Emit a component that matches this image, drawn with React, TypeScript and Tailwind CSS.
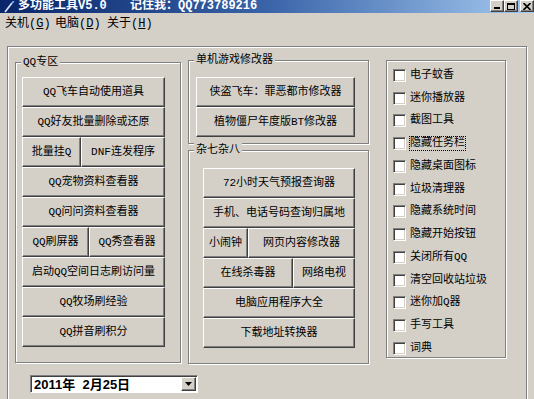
import type { ReactNode } from "react";

const raised =
  "border border-t-white border-l-white border-r-[#404040] border-b-[#404040] shadow-[inset_-1px_-1px_0_#808080]";
const etched = "border border-[#808080] shadow-[1px_1px_0_#fff,inset_1px_1px_0_#fff]";

function Btn({ children, className = "" }: { children: ReactNode; className?: string }) {
  return (
    <div className={`${raised} flex h-[30px] shrink-0 items-center justify-center bg-[#d4d0c8] text-[11px] leading-none whitespace-nowrap ${className}`}>
      {children}
    </div>
  );
}

function Group({ label, className = "", children }: { label?: string; className?: string; children: ReactNode }) {
  return (
    <div className={`relative ${etched} ${className}`}>
      {label && (
        <span className="absolute -top-[8px] left-[5px] bg-[#d4d0c8] px-[2px] text-[11px] leading-[14px]">{label}</span>
      )}
      {children}
    </div>
  );
}

const checks = [
  "电子蚊香",
  "迷你播放器",
  "截图工具",
  "隐藏任务栏",
  "隐藏桌面图标",
  "垃圾清理器",
  "隐藏系统时间",
  "隐藏开始按钮",
  "关闭所有QQ",
  "清空回收站垃圾",
  "迷你加Q器",
  "手写工具",
  "词典",
];

function TitleBar() {
  return (
    <div className="flex h-[13px] items-center overflow-hidden bg-linear-to-r from-[#0a246a] via-[#3a64a8] to-[#a6caf0] text-white">
      <svg width="14" height="12" viewBox="0 0 14 12" className="ml-[2px] shrink-0">
        <path d="M3 11 L10 2" stroke="#dfe8ff" strokeWidth="1.6" />
        <path d="M10 2 L12 0" stroke="#7fb0ff" strokeWidth="1.6" />
      </svg>
      <span className="ml-[2px] w-[112px] shrink-0 text-[12px] leading-[13px] font-bold">多功能工具V5.0</span>
      <span className="text-[12px] leading-[13px] font-bold">记住我：QQ773789216</span>
      <div className="ml-auto flex items-end self-start">
        <div className={`${raised} flex h-[12px] w-[14px] items-end justify-center bg-[#d4d0c8] pb-[2px]`}>
          <div className="h-[2px] w-[6px] bg-black" />
        </div>
        <div className={`${raised} flex h-[12px] w-[14px] items-center justify-center bg-[#d4d0c8]`}>
          <div className="h-[7px] w-[8px] border border-t-2 border-black" />
        </div>
        <div className={`${raised} ml-[2px] flex h-[12px] w-[14px] items-center justify-center bg-[#d4d0c8]`}>
          <svg width="8" height="7" viewBox="0 0 8 7">
            <path d="M0.5 0 L7.5 7 M7.5 0 L0.5 7" stroke="black" strokeWidth="1.6" />
          </svg>
        </div>
      </div>
    </div>
  );
}

function MenuBar() {
  const items: [string, string][] = [
    ["关机", "G"],
    ["电脑", "D"],
    ["关于", "H"],
  ];
  return (
    <div className="flex h-[17px] items-center pt-[4px] pl-[5px] text-[12px] leading-none">
      {items.map(([t, k], i) => (
        <span key={k} className={i === 0 ? "w-[50px]" : "w-[52px]"}>
          {t}(<span className="underline">{k}</span>)
        </span>
      ))}
    </div>
  );
}

export default function App() {
  return (
    <div className="h-[399px] w-[534px] overflow-hidden bg-[#d4d0c8] text-black [font-family:'Liberation_Mono','Noto_Sans_CJK_SC',monospace]">
      <TitleBar />
      <MenuBar />
      <div className={`mt-[16px] ml-[7px] flex h-[400px] w-[520px] ${etched} pt-[13px] pl-[7px]`}>
        {/* left column */}
        <div className="flex w-[166px] shrink-0 flex-col">
          <Group label="QQ专区" className="mt-[2px] h-[301px] w-[166px] pt-[14px] pl-[6px]">
            <div className="flex w-[143px] flex-col">
              <Btn>QQ飞车自动使用道具</Btn>
              <Btn>QQ好友批量删除或还原</Btn>
              <div className="flex">
                <Btn className="w-[59px]">批量挂Q</Btn>
                <Btn className="w-[84px]">DNF连发程序</Btn>
              </div>
              <Btn>QQ宠物资料查看器</Btn>
              <Btn>QQ问问资料查看器</Btn>
              <div className="flex">
                <Btn className="w-[67px]">QQ刷屏器</Btn>
                <Btn className="w-[76px]">QQ秀查看器</Btn>
              </div>
              <Btn>启动QQ空间日志刷访问量</Btn>
              <Btn>QQ牧场刷经验</Btn>
              <Btn>QQ拼音刷积分</Btn>
            </div>
          </Group>
          <div className="mt-[12px] ml-[15px] flex h-[18px] w-[168px] items-center border border-t-[#808080] border-l-[#808080] border-r-white border-b-white bg-white shadow-[inset_1px_1px_0_#404040]">
            <span className="ml-[3px] flex-1 text-[13px] leading-none font-bold whitespace-pre [font-family:'Liberation_Sans','Noto_Sans_CJK_SC',sans-serif]">
              2011年  2月25日
            </span>
            <div className={`${raised} mr-[1px] flex h-[14px] w-[15px] items-center justify-center bg-[#d4d0c8]`}>
              <svg width="7" height="4" viewBox="0 0 7 4">
                <path d="M0 0 H7 L3.5 4 Z" fill="black" />
              </svg>
            </div>
          </div>
        </div>

        {/* middle column */}
        <div className="ml-[7px] flex w-[181px] shrink-0 flex-col">
          <Group label="单机游戏修改器" className="h-[84px] pt-[16px] pl-[7px]">
            <div className="flex w-[159px] flex-col">
              <Btn>侠盗飞车：罪恶都市修改器</Btn>
              <Btn>植物僵尸年度版BT修改器</Btn>
            </div>
          </Group>
          <Group label="杂七杂八" className="mt-[6px] h-[214px] pt-[17px] pl-[14px]">
            <div className="flex w-[152px] flex-col">
              <Btn>72小时天气预报查询器</Btn>
              <Btn>手机、电话号码查询归属地</Btn>
              <div className="flex">
                <Btn className="w-[45px]">小闹钟</Btn>
                <Btn className="w-[107px]">网页内容修改器</Btn>
              </div>
              <div className="flex">
                <Btn className="w-[90px]">在线杀毒器</Btn>
                <Btn className="w-[62px]">网络电视</Btn>
              </div>
              <Btn>电脑应用程序大全</Btn>
              <Btn>下载地址转换器</Btn>
            </div>
          </Group>
        </div>

        {/* right column */}
        <Group className="ml-[17px] h-[298px] w-[120px] shrink-0 pt-[3px] pl-[6px]">
          <div className="flex flex-col">
            {checks.map((c) => (
              <div key={c} className="flex h-[22.75px] items-center">
                <div className="h-[13px] w-[13px] shrink-0 border border-t-[#808080] border-l-[#808080] border-r-white border-b-white bg-white shadow-[inset_1px_1px_0_#404040,inset_-1px_-1px_0_#d4d0c8]" />
                <span
                  className={`ml-[4px] text-[11px] leading-[13px] whitespace-nowrap ${
                    c === "隐藏任务栏" ? "outline outline-dotted outline-black" : ""
                  }`}
                >
                  {c}
                </span>
              </div>
            ))}
          </div>
        </Group>
      </div>
    </div>
  );
}
